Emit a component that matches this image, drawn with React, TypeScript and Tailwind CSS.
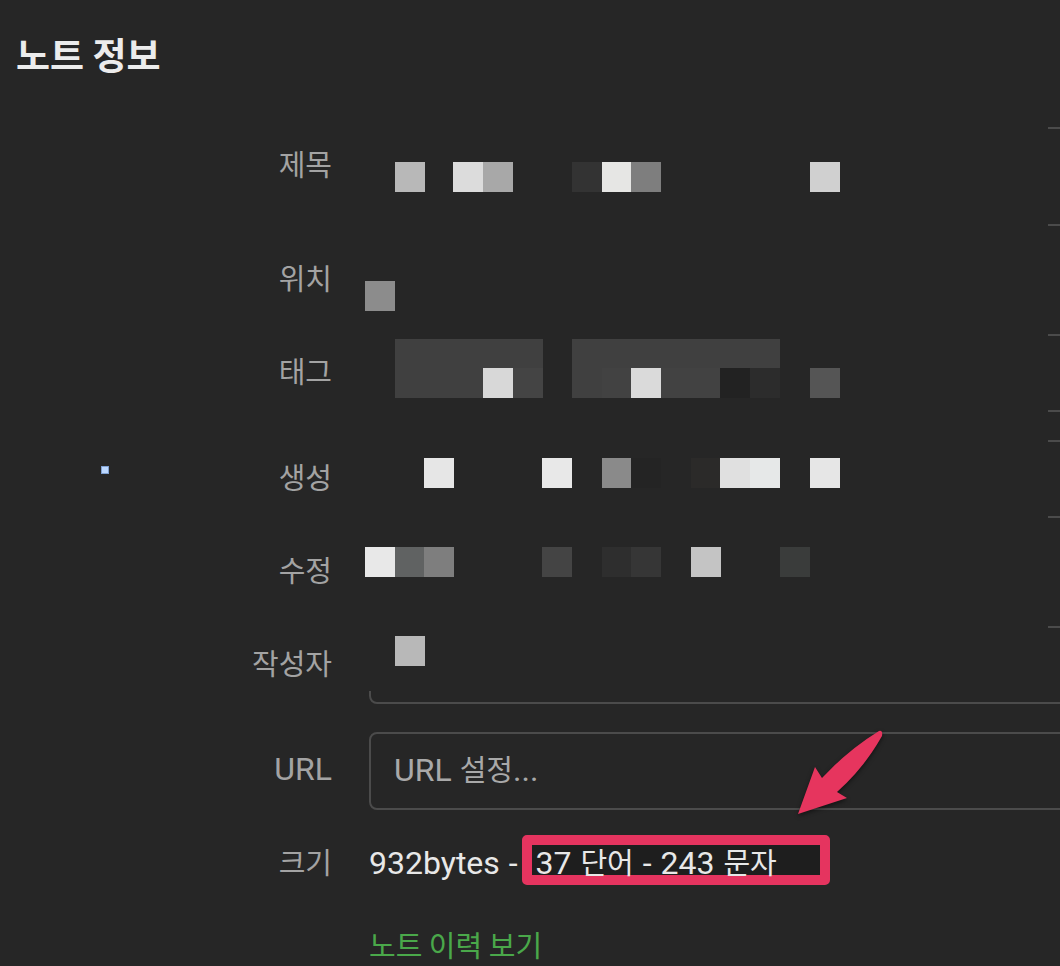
import React from 'react';

const KO = "font-['Noto_Sans_CJK_KR',sans-serif] text-[29px]";
const EN = "font-['Roboto','Noto_Sans_CJK_KR',sans-serif] text-[32px]";

// split a string into Hangul / latin runs so each gets its own face and size
const Mixed: React.FC<{ text: string }> = ({ text }) => (
    <span className="whitespace-pre">
        {text.split(/([가-힣]+)/).filter(Boolean).map((part, i) => (
            <span key={i} className={/[가-힣]/.test(part) ? KO : EN}>{part}</span>
        ))}
    </span>
);

const Label: React.FC<{ text: string; top?: boolean }> = ({ text, top }) => (
    <div className={`flex justify-end leading-[36px] text-[#a3a3a3] ${top ? 'pt-[18px]' : 'items-center'}`}>
        <Mixed text={text} />
    </div>
);

const Box: React.FC<{ tall?: boolean; children?: React.ReactNode }> = ({ tall, children }) => (
    <div className={`flex w-[760px] items-center rounded-lg border-2 border-[#4b4b4b] pl-[23px] ${tall ? 'h-[99px]' : 'h-[78px]'}`}>
        {children}
    </div>
);

// redacted (pixelated) cells, page coordinates
const cells: { x: number; y: number; w?: number; h?: number; c: string }[] = [
    { x: 395, y: 162, c: '#b8b8b8' },
    { x: 453, y: 162, c: '#dcdcdc' },
    { x: 483, y: 162, c: '#a8a8a8' },
    { x: 572, y: 162, c: '#333333' },
    { x: 602, y: 162, c: '#e6e6e4' },
    { x: 631, y: 162, c: '#7e7e7e' },
    { x: 810, y: 162, c: '#d0d0d0' },
    { x: 365, y: 281, c: '#8c8c8c' },
    { x: 395, y: 339, w: 148, h: 29, c: '#404040' },
    { x: 572, y: 339, w: 208, h: 29, c: '#404040' },
    { x: 395, y: 368, w: 89, c: '#404040' },
    { x: 483, y: 368, c: '#d8d8d8' },
    { x: 513, y: 368, c: '#444444' },
    { x: 572, y: 368, c: '#404040' },
    { x: 602, y: 368, c: '#424242' },
    { x: 631, y: 368, c: '#dadada' },
    { x: 661, y: 368, w: 60, c: '#424242' },
    { x: 720, y: 368, c: '#222222' },
    { x: 750, y: 368, c: '#2c2c2c' },
    { x: 810, y: 368, c: '#555555' },
    { x: 424, y: 458, c: '#e6e6e6' },
    { x: 542, y: 458, c: '#e8e8e8' },
    { x: 602, y: 458, c: '#8a8a8a' },
    { x: 631, y: 458, c: '#242424' },
    { x: 691, y: 458, c: '#2b2a29' },
    { x: 720, y: 458, c: '#e0e0e0' },
    { x: 750, y: 458, c: '#e6e8e8' },
    { x: 810, y: 458, c: '#e6e6e6' },
    { x: 365, y: 547, c: '#e8e8e8' },
    { x: 395, y: 547, c: '#606262' },
    { x: 424, y: 547, c: '#7e7e7e' },
    { x: 542, y: 547, c: '#444444' },
    { x: 602, y: 547, c: '#2e2e2e' },
    { x: 631, y: 547, c: '#363636' },
    { x: 691, y: 547, c: '#c4c4c4' },
    { x: 780, y: 547, c: '#3a3c3b' },
    { x: 395, y: 636, c: '#b8b8b8' },
];

const OX = 364;
const OY = 110;

const App: React.FC = () => {
    return (
        <div className="relative h-[966px] w-full overflow-hidden bg-[#262626]">
            <h1 className="pl-[16px] pt-[29px] font-['Noto_Sans_CJK_KR',sans-serif] text-[37px] font-bold leading-[50px] text-[#ececec]">
                노트 정보
            </h1>

            <div className="mt-[48px] flex flex-col gap-[28px]">
                <div className="grid grid-cols-[332px_1fr] gap-x-[37px]">
                    <Label text="제목" top />
                    <Box tall />
                </div>
                <div className="grid h-[52px] grid-cols-[332px_1fr] gap-x-[37px]">
                    <Label text="위치" />
                    <div />
                </div>
                <div className="grid grid-cols-[332px_1fr] gap-x-[37px]">
                    <Label text="태그" />
                    <Box />
                </div>
                <div className="grid grid-cols-[332px_1fr] gap-x-[37px]">
                    <Label text="생성" />
                    <Box />
                </div>
                <div className="grid h-[52px] grid-cols-[332px_1fr] gap-x-[37px]">
                    <Label text="수정" />
                    <div />
                </div>
                <div className="grid grid-cols-[332px_1fr] gap-x-[37px]">
                    <Label text="작성자" />
                    <Box />
                </div>
                <div className="grid grid-cols-[332px_1fr] gap-x-[37px]">
                    <Label text="URL" />
                    <Box>
                        <span className="leading-[36px] text-[#a9a9a9]"><Mixed text="URL 설정..." /></span>
                    </Box>
                </div>
                <div className="grid h-[52px] grid-cols-[332px_1fr] gap-x-[37px]">
                    <Label text="크기" />
                    <div className="relative z-10 flex items-center leading-[36px] text-[#e8e8e8] [word-spacing:1px]">
                        <Mixed text="932bytes -  37 단어 - 243 문자" />
                    </div>
                </div>
                <div className="grid h-[52px] grid-cols-[332px_1fr] gap-x-[37px]">
                    <div />
                    <div className="flex items-center leading-[36px] text-[#4aa84a]">
                        <span className={KO}>노트 이력 보기</span>
                    </div>
                </div>
            </div>

            {/* pixelated redaction over the hidden values */}
            <div className="absolute left-[364px] top-[110px] z-20 h-[581px] w-[684px] bg-[#262626]">
                {cells.map((c, i) => (
                    <div
                        key={i}
                        className="absolute"
                        style={{ left: c.x - OX, top: c.y - OY, width: c.w ?? 30, height: c.h ?? 30, background: c.c }}
                    />
                ))}
            </div>

            {/* stray selection marker */}
            <div className="absolute left-[101px] top-[466px] h-[8px] w-[8px] border border-[#7e9fd0] bg-[#bcd8ff]" />

            {/* annotation: highlight box */}
            <div className="absolute left-[522px] top-[835px] z-0 h-[50px] w-[308px] rounded-[5px] border-[10px] border-[#e5345f] bg-[#1e1e1e]" />

            {/* annotation: arrow */}
            <svg
                className="absolute left-[780px] top-[720px] z-30 drop-shadow-[0_2px_2px_rgba(0,0,0,0.5)]"
                width="110"
                height="110"
                viewBox="0 0 110 110"
            >
                <path d="M18 94 L35 47 L42 58 Q68 30 99 11 Q103 10 102 16 Q84 48 57 72 L67 78 Z" fill="#e6355e" />
            </svg>
        </div>
    );
};

export default App;
